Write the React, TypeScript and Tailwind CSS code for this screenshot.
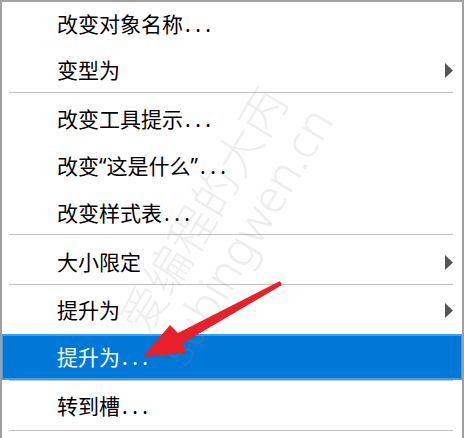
import { ReactNode } from "react";

type Item = { label: string; dots?: boolean; h: string; sub?: boolean; active?: boolean };

const groups: Item[][] = [
  [
    { label: "改变对象名称", dots: true, h: "h-[45px]" },
    { label: "变型为", h: "h-[45px] pt-[2px]", sub: true },
  ],
  [
    { label: "改变工具提示", dots: true, h: "h-[47px] pt-[5px]" },
    { label: "改变“这是什么”", dots: true, h: "h-[47px] pt-[6px]" },
    { label: "改变样式表", dots: true, h: "h-[47px] pt-[6px]" },
  ],
  [{ label: "大小限定", h: "h-[49px] pt-[6px]", sub: true }],
  [
    { label: "提升为", h: "h-[49px] pt-[2px]", sub: true },
    { label: "提升为", dots: true, h: "h-[46px]", active: true },
  ],
  [{ label: "转到槽", dots: true, h: "h-[49px] pt-[2px]" }],
];

function SubArrow() {
  return (
    <svg width="8" height="15" viewBox="0 0 8 15" className="shrink-0">
      <polygon points="0,0 8,7.5 0,15" fill="#555555" />
    </svg>
  );
}

function Label({ item }: { item: Item }) {
  return (
    <span>
      {item.label}
      {item.dots && <span className="ml-[2px] tracking-[4.5px]">...</span>}
    </span>
  );
}

function Row({ item }: { item: Item }): ReactNode {
  if (item.active) {
    return (
      <div
        className={`${item.h} relative -mx-px flex items-center border-2 border-[#3d9ff0] bg-[#0078d7] pl-[54px] text-white`}
      >
        <Label item={item} />
      </div>
    );
  }
  return (
    <div className={`${item.h} flex items-center justify-between pl-[55px] pr-[9px] text-black`}>
      <Label item={item} />
      {item.sub && <SubArrow />}
    </div>
  );
}

export default function App() {
  return (
    <div
      className="relative w-[464px] h-[438px] overflow-hidden bg-white border-t-2 border-x-2 border-[#a0a0a0] text-[21px] leading-none"
      style={{ fontFamily: '"Noto Sans", "Noto Sans CJK SC", sans-serif' }}
    >
      {groups.map((g, i) => (
        <div key={i}>
          {g.map((item, j) => (
            <Row key={j} item={item} />
          ))}
          <div className="h-px ml-[7px] mr-[9px] bg-[#c2c2c2]" />
        </div>
      ))}

      {/* watermark */}
      <div className="pointer-events-none absolute left-[222px] top-[221px] -translate-x-1/2 -translate-y-1/2 -rotate-[59deg] whitespace-nowrap text-center text-[46px] leading-[49px] font-light text-[rgba(150,150,150,0.18)]">
        <div>爱编程的大丙</div>
        <div>subingwen.cn</div>
      </div>

      {/* red arrow */}
      <svg
        className="pointer-events-none absolute -left-[2px] -top-[2px]"
        width="464"
        height="438"
        viewBox="0 0 464 438"
      >
        <polygon
          points="280,281 178,333 170,325 143,357 186,353 183,343 282,285"
          fill="#e8202a"
        />
      </svg>
    </div>
  );
}
